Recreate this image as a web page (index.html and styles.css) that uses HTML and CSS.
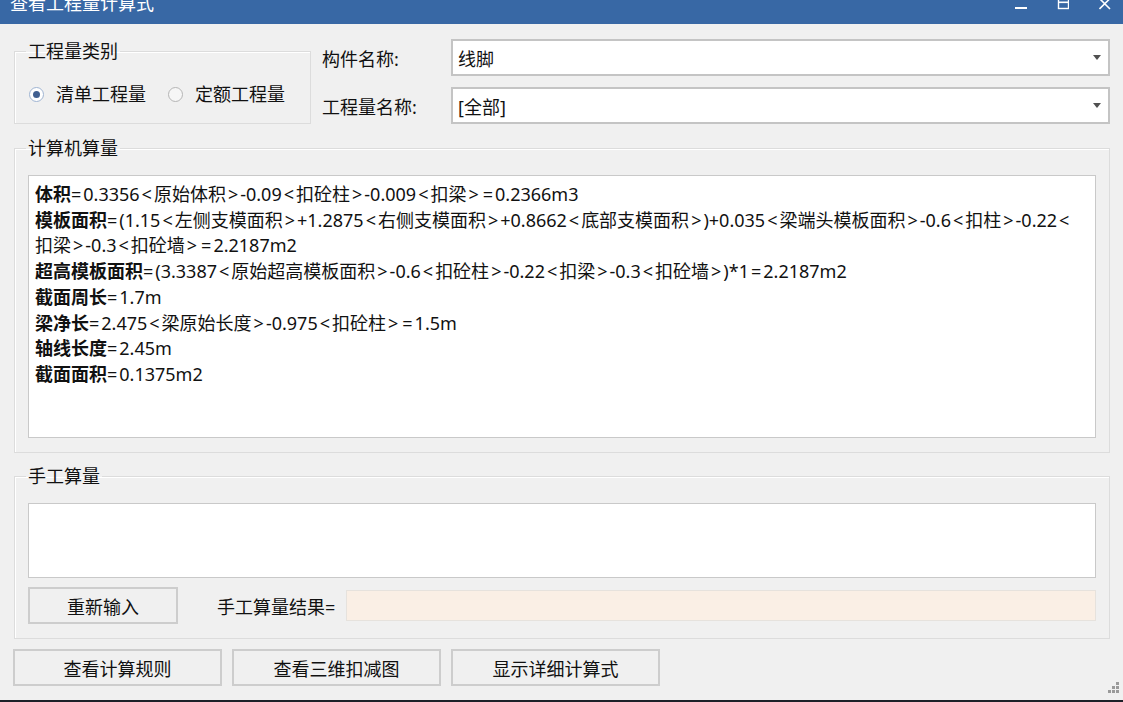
FILE: index.html
```html
<!DOCTYPE html>
<html lang="zh-CN">
<head>
<meta charset="utf-8">
<title>查看工程量计算式</title>
<link rel="stylesheet" href="styles.css">
</head>
<body>
<div class="titlebar">
  <div class="title">查看工程量计算式</div>
  <div class="controls">
    <svg width="12" height="12" viewBox="0 0 12 12"><rect x="0" y="7" width="12" height="2" fill="#fff"/></svg>
    <svg width="12" height="12" viewBox="0 0 12 12"><rect x="1.5" y="-1" width="10" height="9.5" fill="none" stroke="#fff" stroke-width="1.4"/><rect x="1.5" y="1.5" width="10" height="1.6" fill="#fff"/></svg>
    <svg width="12" height="12" viewBox="0 0 12 12"><path d="M0.5 -1.5 L11 9 M11 -1.5 L0.5 9" stroke="#fff" stroke-width="1.6" fill="none"/></svg>
  </div>
</div>
<div class="main">
  <div class="top">
    <fieldset class="group kind">
      <legend>工程量类别</legend>
      <div class="kind-body">
        <div class="opt"><span class="radio on"></span><span>清单工程量</span></div>
        <div class="opt"><span class="radio"></span><span>定额工程量</span></div>
      </div>
    </fieldset>
    <div class="fields">
      <div class="field">
        <label>构件名称:</label>
        <div class="combo"><span>线脚</span><span class="arrow"></span></div>
      </div>
      <div class="field">
        <label>工程量名称:</label>
        <div class="combo"><span>[全部]</span><span class="arrow"></span></div>
      </div>
    </div>
  </div>

  <fieldset class="group calc">
    <legend>计算机算量</legend>
    <div class="group-body">
      <div class="textbox formula">
        <div><b>体积</b><span class="op">=</span>0.3356<span class="op">&lt;</span>原始体积<span class="op">&gt;</span>-0.09<span class="op">&lt;</span>扣砼柱<span class="op">&gt;</span>-0.009<span class="op">&lt;</span>扣梁<span class="op">&gt;</span><span class="op">=</span>0.2366m3</div>
        <div><b>模板面积</b><span class="op">=</span>(1.15<span class="op">&lt;</span>左侧支模面积<span class="op">&gt;</span>+1.2875<span class="op">&lt;</span>右侧支模面积<span class="op">&gt;</span>+0.8662<span class="op">&lt;</span>底部支模面积<span class="op">&gt;</span>)+0.035<span class="op">&lt;</span>梁端头模板面积<span class="op">&gt;</span>-0.6<span class="op">&lt;</span>扣柱<span class="op">&gt;</span>-0.22<span class="op">&lt;</span></div>
        <div>扣梁<span class="op">&gt;</span>-0.3<span class="op">&lt;</span>扣砼墙<span class="op">&gt;</span><span class="op">=</span>2.2187m2</div>
        <div><b>超高模板面积</b><span class="op">=</span>(3.3387<span class="op">&lt;</span>原始超高模板面积<span class="op">&gt;</span>-0.6<span class="op">&lt;</span>扣砼柱<span class="op">&gt;</span>-0.22<span class="op">&lt;</span>扣梁<span class="op">&gt;</span>-0.3<span class="op">&lt;</span>扣砼墙<span class="op">&gt;</span>)*1<span class="op">=</span>2.2187m2</div>
        <div><b>截面周长</b><span class="op">=</span>1.7m</div>
        <div><b>梁净长</b><span class="op">=</span>2.475<span class="op">&lt;</span>梁原始长度<span class="op">&gt;</span>-0.975<span class="op">&lt;</span>扣砼柱<span class="op">&gt;</span><span class="op">=</span>1.5m</div>
        <div><b>轴线长度</b><span class="op">=</span>2.45m</div>
        <div><b>截面面积</b><span class="op">=</span>0.1375m2</div>
      </div>
    </div>
  </fieldset>

  <fieldset class="group manual">
    <legend>手工算量</legend>
    <div class="group-body">
      <div class="textbox manual-box"></div>
      <div class="manual-row">
        <div class="btn small">重新输入</div>
        <div class="result-label">手工算量结果=</div>
        <div class="result"></div>
      </div>
    </div>
  </fieldset>

  <div class="bottom">
    <div class="btn wide">查看计算规则</div>
    <div class="btn wide">查看三维扣减图</div>
    <div class="btn wide">显示详细计算式</div>
  </div>
</div>
<svg class="grip" width="14" height="14" viewBox="0 0 14 14">
  <rect x="10" y="0" width="3" height="3" fill="#9a9a9a"/>
  <rect x="6" y="4" width="3" height="3" fill="#9a9a9a"/>
  <rect x="10" y="4" width="3" height="3" fill="#9a9a9a"/>
  <rect x="2" y="8" width="3" height="3" fill="#9a9a9a"/>
  <rect x="6" y="8" width="3" height="3" fill="#9a9a9a"/>
  <rect x="10" y="8" width="3" height="3" fill="#9a9a9a"/>
</svg>
<div class="taskbar"></div>
</body>
</html>
```
FILE: styles.css
```css
* { box-sizing: border-box; }
html, body { margin: 0; padding: 0; }
body {
  width: 1123px;
  height: 702px;
  overflow: hidden;
  position: relative;
  display: flex;
  flex-direction: column;
  background: #f0f0f0;
  color: #111;
  font-family: "Noto Sans", "Noto Sans CJK SC", sans-serif;
  font-size: 18px;
}
.titlebar {
  flex: none;
  height: 24px;
  background: #3868a5;
  display: flex;
  justify-content: space-between;
  overflow: hidden;
}
.title {
  color: #fff;
  font-size: 18px;
  line-height: 18px;
  margin: -6px 0 0 10px;
  white-space: nowrap;
}
.controls {
  display: flex;
  gap: 30px;
  margin-right: 12px;
}
.controls svg { display: block; }

.main {
  flex: 1;
  padding: 0 13px 0 14px;
}
.group {
  margin: 0;
  padding: 0;
  min-width: 0;
  border: 1px solid #dcdcdc;
  box-shadow: inset 1px 1px 0 #fff;
}
.group legend {
  margin-left: 11px;
  padding: 0 2px;
  line-height: 20px;
  font-size: 18px;
}

.top {
  display: flex;
  margin-top: 15px;
  height: 85px;
}
.kind {
  width: 297px;
  height: 83px;
  margin-top: 2px;
  flex: none;
}
.kind-body {
  display: flex;
  align-items: center;
  padding: 21px 0 0 14px;
}
.opt {
  display: flex;
  align-items: center;
  gap: 12px;
  line-height: 24px;
}
.opt + .opt { margin-left: 22px; }
.radio {
  width: 15px;
  height: 15px;
  border-radius: 50%;
  border: 1px solid #b5b5b5;
  background: #f6f6f6;
  display: flex;
  align-items: center;
  justify-content: center;
}
.radio.on {
  border-color: #9fb4d2;
  background: #fff;
}
.radio.on::after {
  content: "";
  width: 7px;
  height: 7px;
  border-radius: 50%;
  background: #405f90;
}

.fields {
  flex: 1;
  margin-left: 11px;
  display: flex;
  flex-direction: column;
  gap: 11px;
}
.field {
  display: flex;
  align-items: center;
  height: 37px;
}
.field label {
  width: 129px;
  flex: none;
}
.combo {
  flex: 1;
  height: 37px;
  background: #fff;
  border: 2px solid #c4c4c4;
  display: flex;
  align-items: center;
  justify-content: space-between;
  padding: 0 7px 0 5px;
}
.arrow {
  width: 0;
  height: 0;
  border-left: 4px solid transparent;
  border-right: 4px solid transparent;
  border-top: 5px solid #505050;
}

.calc {
  margin-top: 14px;
  height: 315px;
}
.group-body {
  padding: 17px 13px 0 13px;
}
.textbox {
  background: #fff;
  border: 1px solid #c9c9c9;
}
.formula {
  height: 263px;
  padding: 6px 0 0 6px;
  line-height: 25.7px;
  white-space: nowrap;
  overflow: hidden;
}
.formula b { font-weight: 700; }
.formula .op { padding: 0 2px; }
.formula b + .op { padding-left: 0; }

.manual {
  margin-top: 13px;
  height: 173px;
}
.manual-box { height: 75px; }
.manual-row {
  display: flex;
  align-items: center;
  height: 37px;
  margin-top: 9px;
}
.btn {
  height: 37px;
  background: #f0f0f0;
  border: 2px solid #cdcdcd;
  display: flex;
  align-items: center;
  justify-content: center;
}
.btn.small { width: 150px; flex: none; }
.result-label {
  width: 129px;
  flex: none;
  margin-left: 39px;
}
.result {
  flex: 1;
  height: 31px;
  background: #faefe5;
  border: 1px solid #e6e2dd;
}

.bottom {
  display: flex;
  gap: 10px;
  margin: 10px 0 0 -1px;
}
.btn.wide { width: 209px; }

.grip {
  position: absolute;
  right: 3px;
  bottom: 6px;
}
.taskbar {
  flex: none;
  height: 2px;
  background: #1d2028;
}
```
